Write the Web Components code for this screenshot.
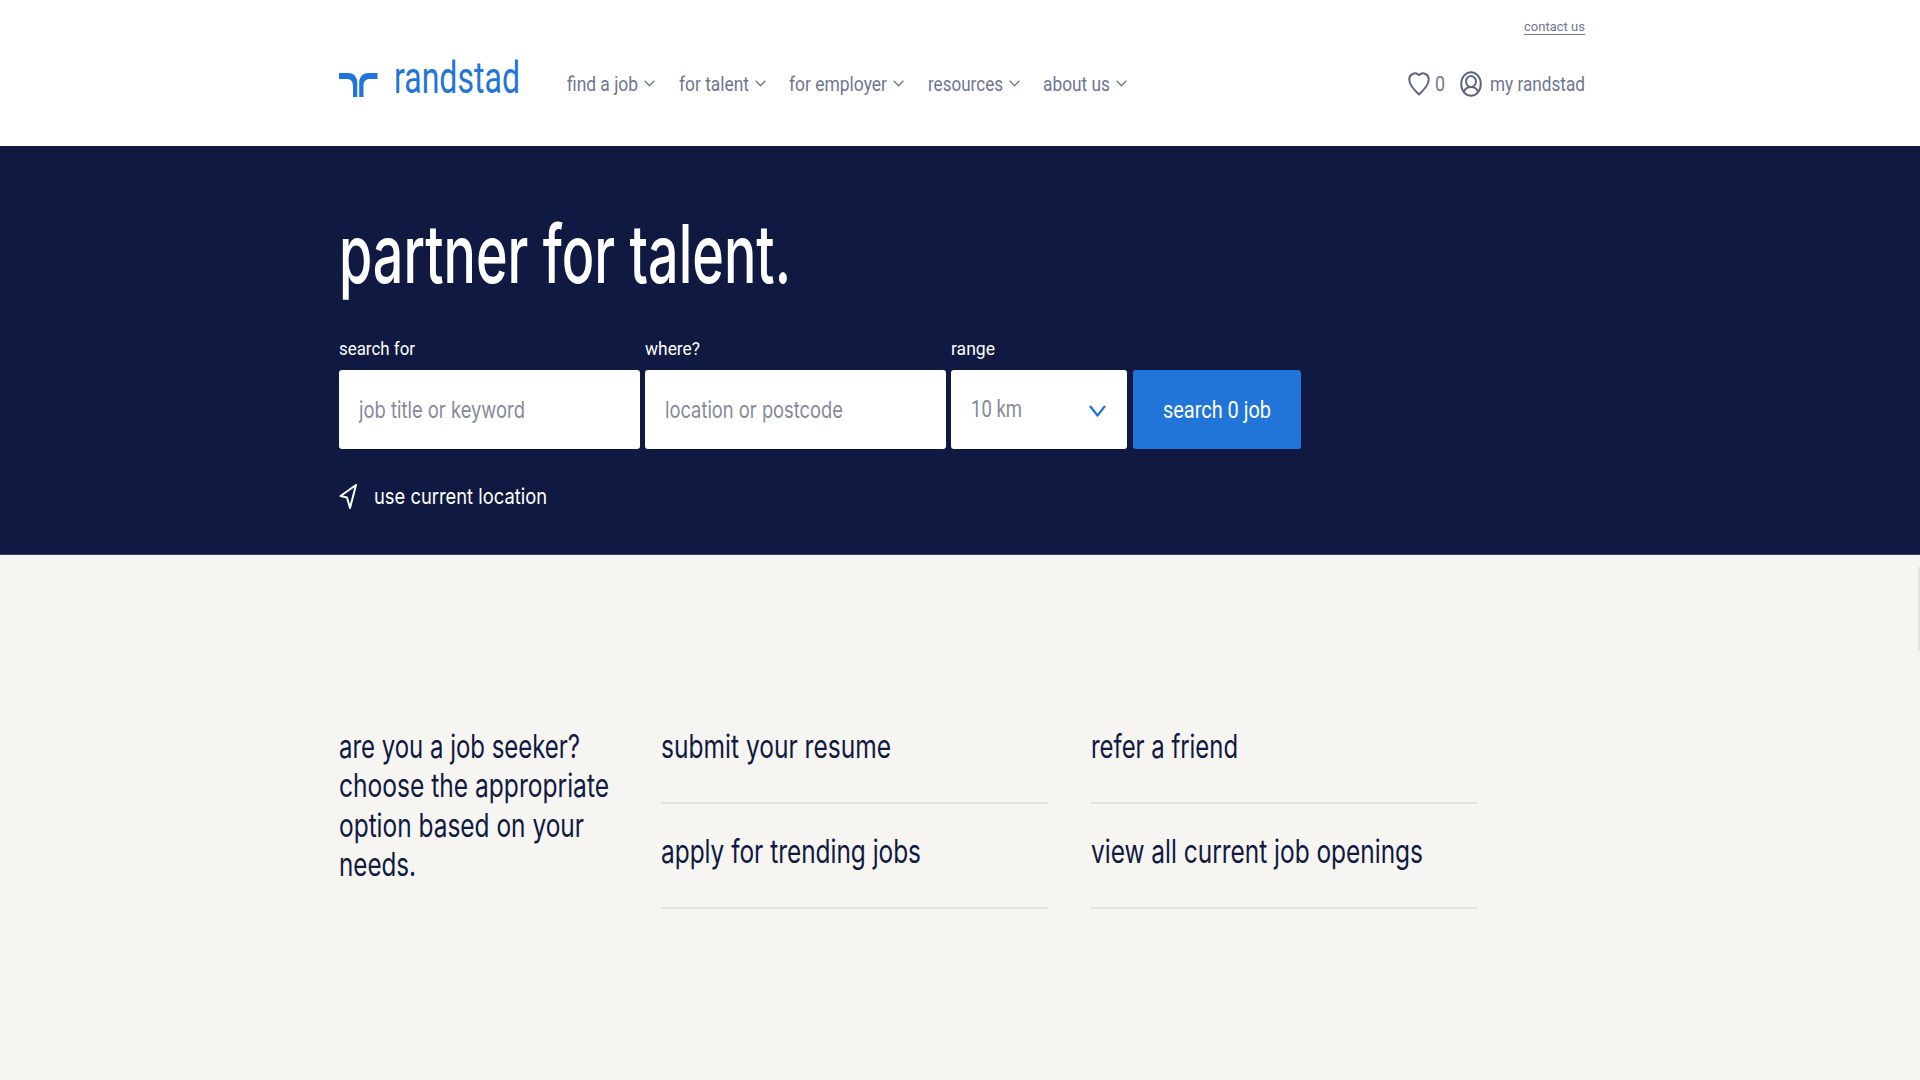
<!doctype html>
<html><head><meta charset="utf-8">
<style>
html,body{margin:0;padding:0;background:#f6f5f1;overflow:hidden}
body{font-family:Roboto,"Liberation Sans",sans-serif;width:1920px;height:1080px}
</style></head>
<body>
<rs-header></rs-header>
<rs-hero></rs-hero>
<rs-links></rs-links>
<script>
/* Text squeezed horizontally to a given width: the reference has narrow letterforms. */
class RsText extends HTMLElement{
  constructor(){super();this.attachShadow({mode:'open'}).innerHTML=
   `<style>:host{display:inline-block;white-space:nowrap;flex:none}
    span{display:inline-block;transform-origin:0 50%}</style><span><slot></slot></span>`;}
  connectedCallback(){
    const w=+this.getAttribute('w');if(!w)return;
    const s=this.shadowRoot.querySelector('span');
    const n=s.getBoundingClientRect().width;
    if(n){s.style.transform=`scaleX(${w/n})`;this.style.width=w+'px';}
  }
}
customElements.define('rs-text',RsText);
const chev=`<svg width="11" height="7" viewBox="0 0 11 7" fill="none" stroke="#6f7590" stroke-width="1.3"><path d="M.7.8 5.5 5.8 10.3.8"/></svg>`;
class RsNavItem extends HTMLElement{
  constructor(){super();this.attachShadow({mode:'open'}).innerHTML=
   `<style>:host{display:flex;align-items:center;gap:6px}</style><slot></slot>${chev}`;}
}
customElements.define('rs-nav-item',RsNavItem);
class RsHeader extends HTMLElement{
  constructor(){super();this.attachShadow({mode:'open'}).innerHTML=`
  <style>
  :host{display:block;height:146px;background:#fff;box-sizing:border-box;padding:0 335px 0 339px;color:#6f7590;font:20px/24px Roboto,sans-serif}
  .top{display:flex;justify-content:flex-end;height:41px;padding-top:19px;box-sizing:border-box;font-size:13px;line-height:16px}
  .u{border-bottom:1px solid #6f7590;height:15px;line-height:16px}
  .main{display:flex;align-items:center;height:47px;margin-top:19px}
  .logo{display:flex;align-items:flex-end;gap:16px;width:228px;margin-bottom:10px;color:#2175d9;font:400 44px/47px Roboto,sans-serif;flex:none}
  .logo svg{display:block;margin-bottom:5px}
  nav{display:flex;gap:23.500px;flex:1}
  .right{display:flex;align-items:center}
  svg{flex:none}
  </style>
  <div class="top"><div class="u"><rs-text w="61">contact us</rs-text></div></div>
  <div class="main">
    <div class="logo">
      <svg width="38.500" height="24" viewBox="0 0 38.500 24" fill="#2175d9"><path d="M0 0H9C15 0 18.300 4 18.300 10V24H14V13C14 8.500 11.500 6 8 6H0Z"/><path d="M38.500 0H29.500C23.500 0 20.200 4 20.200 10V24H24.500V13C24.500 8.500 27 6 30.500 6H38.500Z"/></svg>
      <rs-text w="126">randstad</rs-text>
    </div>
    <nav>
      <rs-nav-item><rs-text w="71">find a job</rs-text></rs-nav-item>
      <rs-nav-item><rs-text w="70">for talent</rs-text></rs-nav-item>
      <rs-nav-item><rs-text w="98">for employer</rs-text></rs-nav-item>
      <rs-nav-item><rs-text w="75">resources</rs-text></rs-nav-item>
      <rs-nav-item><rs-text w="67">about us</rs-text></rs-nav-item>
    </nav>
    <div class="right">
      <svg width="22" height="25" viewBox="0 0 22 25" fill="none" stroke="#5f6684" stroke-width="2" stroke-linejoin="round"><path d="M11 23.500C6 18.500 1.200 14 1.200 8A5.800 6.500 0 0 1 11 4.200 5.800 6.500 0 0 1 20.800 8C20.800 14 16 18.500 11 23.500Z"/></svg>
      <rs-text w="10" style="margin:0 15px 0 5px">0</rs-text>
      <svg width="22" height="26" viewBox="0 0 22 26" fill="none" stroke="#5f6684" stroke-width="2"><ellipse cx="11" cy="13" rx="9.800" ry="11.800"/><ellipse cx="11" cy="10.500" rx="5" ry="5.400"/><path d="M3.800 21C5 17.500 7.500 16 11 16S17 17.500 18.200 21"/></svg>
      <rs-text w="95" style="margin-left:8px">my randstad</rs-text>
    </div>
  </div>`;}
}
customElements.define('rs-header',RsHeader);
class RsField extends HTMLElement{
  constructor(){super();this.attachShadow({mode:'open'}).innerHTML=`
  <style>
  :host{display:block;width:var(--w,301px);flex:none}
  .l{display:block;height:34px;padding-top:2px;box-sizing:border-box;color:#fff;font:19px/22px Roboto,sans-serif}
  .b{height:79px;background:#fff;border-radius:3px;display:flex;align-items:center;justify-content:space-between;box-sizing:border-box;padding:0 20px;color:#85899c;font:400 23px/28px Inter,sans-serif}
  </style>
  <div class="l"><slot name="label"></slot></div><div class="b"><slot></slot></div>`;}
}
customElements.define('rs-field',RsField);
class RsHero extends HTMLElement{
  constructor(){super();this.attachShadow({mode:'open'}).innerHTML=`
  <style>
  :host{display:block;height:409px;background:#0f1941;box-sizing:border-box;padding:58px 0 0 339px;color:#fff;border-bottom:1px solid #3a4163}
  h1{margin:0;height:132px;font:500 81px/100px Inter,sans-serif}
  .row{display:flex;gap:5.200px;align-items:flex-end}
  button{all:unset;display:flex;align-items:center;justify-content:center;width:168px;height:79px;background:#2175d9;border-radius:3px;color:#fff;font:23px/28px Roboto,sans-serif;flex:none;padding-top:2px;box-sizing:border-box}
  .loc{display:flex;align-items:center;gap:17px;margin-top:33px;font:400 22px/28px Inter,sans-serif}
  svg{display:block;flex:none}
  .km{font-family:Roboto,sans-serif;font-weight:400}
  </style>
  <h1><rs-text w="452">partner for talent.</rs-text></h1>
  <div class="row">
    <rs-field><rs-text slot="label" w="76">search for</rs-text><rs-text w="166">job title or keyword</rs-text></rs-field>
    <rs-field><rs-text slot="label" w="55">where?</rs-text><rs-text w="178">location or postcode</rs-text></rs-field>
    <rs-field style="--w:176px"><rs-text slot="label" w="44">range</rs-text><rs-text class="km" w="51">10 km</rs-text>
      <svg width="17" height="12" viewBox="0 0 17 12" fill="none" stroke="#2175d9" stroke-width="2.200" style="margin:3px 1px 0 0"><path d="M1 1 8.500 10.500 16 1"/></svg></rs-field>
    <button><rs-text w="108">search 0 job</rs-text></button>
  </div>
  <div class="loc">
    <svg width="18" height="25" viewBox="0 0 18 25" fill="none" stroke="#fff" stroke-width="2" stroke-linejoin="round"><path d="M17 1 1.500 12 8 13.500 11 24Z"/></svg>
    <rs-text w="173">use current location</rs-text>
  </div>`;}
}
customElements.define('rs-hero',RsHero);
class RsLink extends HTMLElement{
  constructor(){super();this.attachShadow({mode:'open'}).innerHTML=`
  <style>:host{display:block;height:77px;margin-bottom:28px;box-sizing:border-box;border-bottom:2px solid #e2e1de}</style><slot></slot>`;}
}
customElements.define('rs-link',RsLink);
class RsLinks extends HTMLElement{
  constructor(){super();this.attachShadow({mode:'open'}).innerHTML=`
  <style>
  :host{display:flex;position:relative;box-sizing:border-box;height:525px;padding:172px 0 0 339px;color:#0f1941;font:400 32px/39.300px Inter,sans-serif}
  :host::after{content:"";position:absolute;right:0;top:12px;width:2px;height:84px;background:#e3e2df}
  .intro{width:322px;flex:none}
  .intro rs-text{display:block}
  .col{width:387px;flex:none;margin-right:43px}
  .col+.col{width:386px}
  </style>
  <div class="intro">
    <rs-text w="241">are you a job seeker?</rs-text>
    <rs-text w="270">choose the appropriate</rs-text>
    <rs-text w="245">option based on your</rs-text>
    <rs-text w="77">needs.</rs-text>
  </div>
  <div class="col">
    <rs-link><rs-text w="230">submit your resume</rs-text></rs-link>
    <rs-link><rs-text w="260">apply for trending jobs</rs-text></rs-link>
  </div>
  <div class="col">
    <rs-link><rs-text w="147">refer a friend</rs-text></rs-link>
    <rs-link><rs-text w="332">view all current job openings</rs-text></rs-link>
  </div>`;}
}
customElements.define('rs-links',RsLinks);
</script>
</body></html>
